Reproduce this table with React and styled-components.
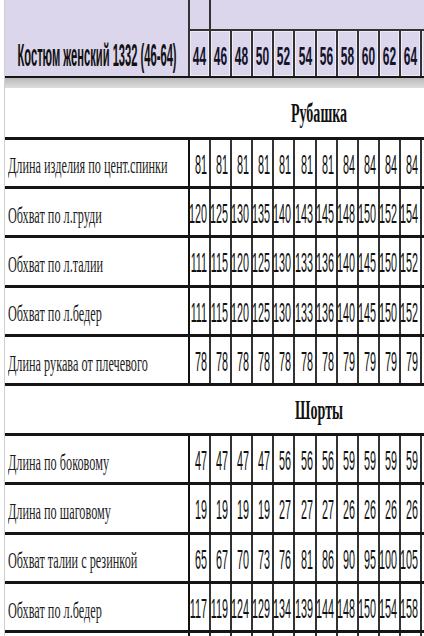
import React from "react";
import styled, { createGlobalStyle } from "styled-components";

const LAVENDER = "#dcd6ec";
const LINE = "#151515";
const GRID = "#333";

const SIZES = [44, 46, 48, 50, 52, 54, 56, 58, 60, 62, 64];

const SECTIONS = [
    {
        title: "Рубашка",
        rows: [
            ["Длина изделия по цент.спинки", [81, 81, 81, 81, 81, 81, 81, 84, 84, 84, 84]],
            ["Обхват по л.груди", [120, 125, 130, 135, 140, 143, 145, 148, 150, 152, 154]],
            ["Обхват по л.талии", [111, 115, 120, 125, 130, 133, 136, 140, 145, 150, 152]],
            ["Обхват по л.бедер", [111, 115, 120, 125, 130, 133, 136, 140, 145, 150, 152]],
            ["Длина рукава от плечевого", [78, 78, 78, 78, 78, 78, 78, 79, 79, 79, 79]],
        ],
    },
    {
        title: "Шорты",
        rows: [
            ["Длина по боковому", [47, 47, 47, 47, 56, 56, 56, 59, 59, 59, 59]],
            ["Длина по шаговому", [19, 19, 19, 19, 27, 27, 27, 26, 26, 26, 26]],
            ["Обхват талии с резинкой", [65, 67, 70, 73, 76, 81, 86, 90, 95, 100, 105]],
            ["Обхват по л.бедер", [117, 119, 124, 129, 134, 139, 144, 148, 150, 154, 158]],
        ],
    },
];

const GlobalStyle = createGlobalStyle`
    body {
        margin: 0;
        background: #fff;
        overflow: hidden;
    }
`;

const App = () => {
    return (
        <>
            <GlobalStyle />
            <Page>
                <Sheet>
                    <Header>
                        <Row height={29}>
                            <div />
                            <TopBox />
                            <TopMerged />
                        </Row>
                        <Row height={47}>
                            <TitleCell><Squeeze scale={0.36} origin="center">Костюм женский 1332 (46-64)</Squeeze></TitleCell>
                            {SIZES.map(s => (
                                <SizeCell key={s}><Squeeze scale={0.46} origin="center">{s}</Squeeze></SizeCell>
                            ))}
                            <SizeCell />
                        </Row>
                    </Header>
                    <Band />
                    {SECTIONS.map((section, si) => (
                        <React.Fragment key={section.title}>
                            <SectionRow first={si === 0}>
                                <div />
                                <SectionTitle><Squeeze scale={0.52} origin="center">{section.title}</Squeeze></SectionTitle>
                            </SectionRow>
                            {section.rows.map(([label, values]) => (
                                <DataRow key={label}>
                                    <LabelCell><Squeeze scale={0.51} origin="left">{label}</Squeeze></LabelCell>
                                    {values.map((v, i) => (
                                        <ValueCell key={i} first={i === 0}><Squeeze scale={0.4} origin="right">{v}</Squeeze></ValueCell>
                                    ))}
                                    <ValueCell />
                                </DataRow>
                            ))}
                        </React.Fragment>
                    ))}
                    <DataRow>
                        <LabelCell />
                        {SIZES.map((s, i) => <ValueCell key={s} first={i === 0} />)}
                        <ValueCell />
                    </DataRow>
                </Sheet>
            </Page>
        </>
    );
};

const Page = styled.div`
    width: 424px;
    height: 636px;
    overflow: hidden;
    background: #fff;
`;

const Sheet = styled.div`
    margin-left: 4px;
    border-left: 1px solid #cfcfcf;
    min-height: 100%;
`;

const Header = styled.div`
    background: ${LAVENDER};
    border-bottom: 2.5px solid ${LINE};
`;

const Row = styled.div`
    display: grid;
    grid-template-columns: 183px repeat(12, 21.1px);
    height: ${props => props.height}px;
`;

const TopBox = styled.div`
    border-left: 2px solid ${GRID};
`;

const TopMerged = styled.div`
    grid-column: 3 / -1;
    border-left: 2px solid ${GRID};
`;

const TitleCell = styled.div`
    display: flex;
    align-items: center;
    justify-content: center;
    padding-top: 6px;
    font-family: "Liberation Sans", Arial, sans-serif;
    font-weight: bold;
    font-size: 31px;
    color: #111;
`;

const SizeCell = styled.div`
    display: flex;
    align-items: center;
    justify-content: center;
    padding-top: 6px;
    box-sizing: border-box;
    border-left: 2px solid ${GRID};
    border-top: 2px solid ${GRID};
    box-shadow: inset 1px 1px 0 rgba(255, 255, 255, 0.55), inset -1px -1px 0 rgba(255, 255, 255, 0.55);
    font-family: "Liberation Sans", Arial, sans-serif;
    font-weight: bold;
    font-size: 26px;
    color: #14142a;
`;

const Band = styled.div`
    height: 10px;
    background: linear-gradient(#b9b9b9, #dedede);
`;

const SectionRow = styled.div`
    display: grid;
    grid-template-columns: 183px 1fr;
    box-sizing: border-box;
    height: ${props => props.first ? 48.5 : 49.4}px;
    border-top: ${props => props.first ? 'none' : `3px solid ${LINE}`};
`;

const SectionTitle = styled.div`
    display: flex;
    align-items: center;
    justify-content: center;
    padding-left: 26px;
    padding-top: 2px;
    font-family: "Liberation Serif", "Times New Roman", serif;
    font-weight: bold;
    font-size: 27px;
    color: #111;
`;

const DataRow = styled.div`
    display: grid;
    grid-template-columns: 183px repeat(12, 21.1px);
    box-sizing: border-box;
    height: 49.4px;
    border-top: 3px solid ${LINE};
`;

const LabelCell = styled.div`
    display: flex;
    align-items: center;
    padding-left: 3px;
    padding-top: 6px;
    font-family: "Liberation Serif", "Times New Roman", serif;
    font-size: 24px;
    color: #1d1d1d;
`;

const ValueCell = styled.div`
    display: flex;
    align-items: center;
    justify-content: flex-end;
    box-sizing: border-box;
    padding-right: 2px;
    padding-top: 5px;
    border-left: 2px solid ${props => props.first ? '#111' : GRID};
    font-family: "Liberation Sans", Arial, sans-serif;
    font-size: 27px;
    color: #111;
`;

const Squeeze = styled.span`
    display: inline-block;
    white-space: nowrap;
    transform: scaleX(${props => props.scale});
    transform-origin: ${props => props.origin} center;
`;

export default App;
